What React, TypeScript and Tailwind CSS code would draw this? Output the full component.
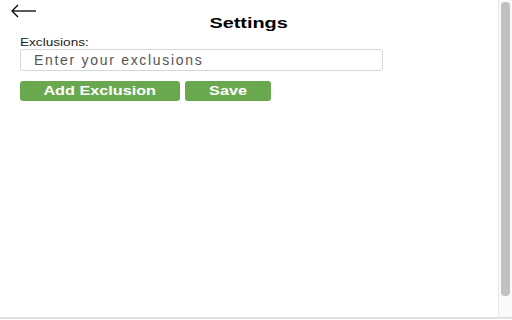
import { useState } from 'react';

// Settings page for the exclusions list
export default function App() {
  const [exclusion, setExclusion] = useState('');
  const [exclusions, setExclusions] = useState<string[]>([]);

  const addExclusion = () => {
    if (!exclusion.trim()) return;
    setExclusions((prev) => [...prev, exclusion.trim()]);
    setExclusion('');
  };

  return (
    <div className="flex h-[320px] w-[512px] flex-col bg-white font-['Liberation_Sans',Arial,sans-serif] text-black">
      <div className="flex min-h-0 flex-1">
        <div className="flex-1 px-5">
          {/* header */}
          <div className="relative h-[37px]">
            <button className="absolute left-[-9px] top-[4px]">
              <svg width="26" height="14" viewBox="0 0 26 14" fill="none" stroke="black" strokeWidth="1.3">
                <path d="M1 7h24" />
                <path d="M7 1L1 7l6 6" />
              </svg>
            </button>
            <h1 className="pt-[15px] text-center text-[14px] leading-[16px] font-bold">
              <span className="inline-block origin-center scale-x-[1.42]">Settings</span>
            </h1>
          </div>

          <label className="block text-[10px] leading-[12px] text-[#222]">
            <span className="inline-block origin-left scale-x-[1.36]">Exclusions:</span>
          </label>
          <input
            value={exclusion}
            onChange={(e) => setExclusion(e.target.value)}
            placeholder="Enter your exclusions"
            className="block h-[22px] w-[363px] rounded-[3px] border border-[#d6d6d6] px-[13px] text-[14px] tracking-[1.7px] text-[#444] placeholder:text-[#555] outline-none"
          />

          <div className="mt-[10px] flex gap-[5px]">
            <button
              onClick={addExclusion}
              className="h-[20px] w-[160px] rounded-[3px] bg-[#6aa84f] text-[12px] font-bold text-white"
            >
              <span className="inline-block origin-center scale-x-[1.35]">Add Exclusion</span>
            </button>
            <button className="h-[20px] w-[86px] rounded-[3px] bg-[#6aa84f] text-[12px] font-bold text-white">
              <span className="inline-block origin-center scale-x-[1.35]">Save</span>
            </button>
          </div>

          {exclusions.length > 0 && (
            <ul className="mt-2 text-[12px]">
              {exclusions.map((item) => (
                <li key={item}>{item}</li>
              ))}
            </ul>
          )}
        </div>

        {/* scrollbar */}
        <div className="flex w-[14px] flex-col border-l border-[#e8e8e8] bg-[#fafafa] px-[2px] pt-[2px] pb-[21px]">
          <div className="flex-1 rounded-[4px] bg-[#c1c1c1]" />
        </div>
      </div>
      <div className="h-[2px] bg-[#e0e0e0]" />
      <div className="h-[1px] bg-white" />
    </div>
  );
}
